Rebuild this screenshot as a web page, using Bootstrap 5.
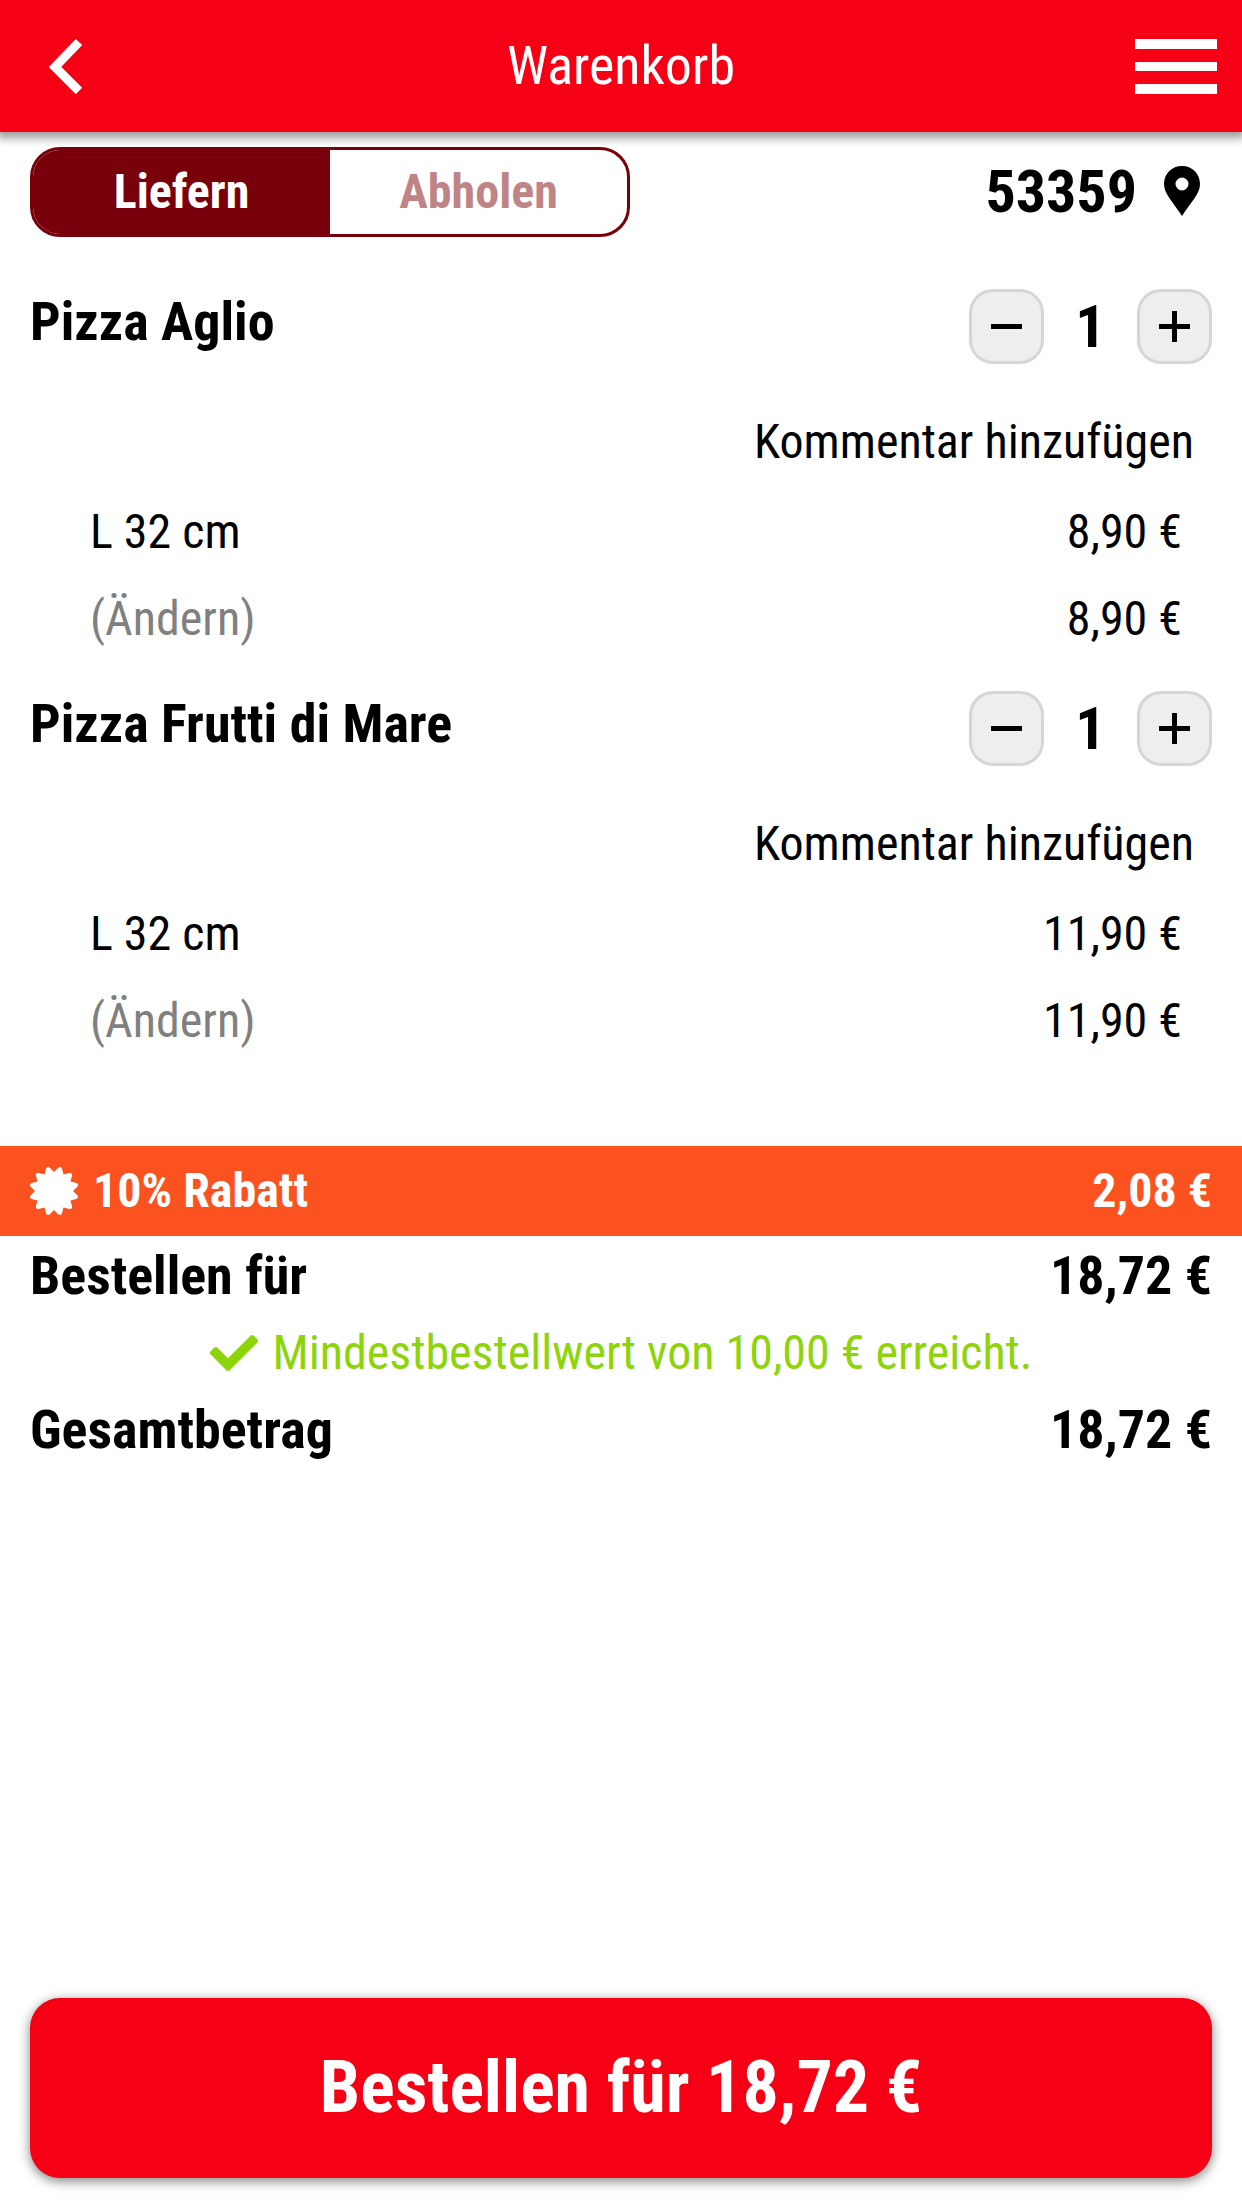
<!DOCTYPE html>
<html lang="de">
<head>
<meta charset="utf-8">
<meta name="viewport" content="width=device-width, initial-scale=1">
<title>Warenkorb</title>
<link href="https://cdn.jsdelivr.net/npm/bootstrap@5.3.0/dist/css/bootstrap.min.css" rel="stylesheet">
<style>
  body { font-family: "Roboto Condensed", Roboto, sans-serif; font-size: 48px; line-height: 72px; color: #000; background: #fff; }
  svg { display: block; flex: none; }
  .app-bar { height: 132px; padding: 0 25px; background: #f50014; color: #fff; box-shadow: 0 3px 9px 3px rgba(0,0,0,.4); }
  .app-title { font-size: 54px; line-height: 64px; font-weight: 400; }
  .bar-side { flex: 1 1 0; }
  .plain-btn { padding: 0; border: 0; background: none; color: inherit; }
  .gutter { padding-left: 30px; padding-right: 30px; }
  .mode-row { margin-top: 15px; }
  .mode-switch { width: 600px; height: 90px; border: 3px solid #78000a; border-radius: 30px; overflow: hidden; }
  .mode-switch label { flex: 1 1 0; display: flex; align-items: center; justify-content: center; font-weight: 700; color: #bf8486; cursor: pointer; }
  .mode-switch .btn-check:checked + label { background: #78000a; color: #fff; }
  .zip-btn { gap: 27px; padding-right: 12px; font-size: 60px; font-weight: 700; line-height: 70px; }
  .cart-list { padding-top: 52px; padding-bottom: 24px; }
  .cart-item { padding-bottom: 29px; }
  .item-title { font-size: 54px; line-height: 66px; font-weight: 700; margin: 0; }
  .stepper-btn { width: 75px; height: 75px; padding: 0; border: 3px solid #d6d6d6; border-radius: 24px; background: #eee; display: flex; align-items: center; justify-content: center; color: #000; }
  .qty { width: 93px; font-size: 60px; font-weight: 700; text-align: center; }
  .note-row { margin-top: 34px; margin-bottom: 3px; height: 87px; padding-right: 18px; }
  .option-row { height: 87px; padding: 0 30px 0 60px; }
  .change-link, .note-link { text-decoration: none; color: #000; }
  .change-link { color: #808080; }
  .totals { padding-top: 29px; }
  .discount-row { height: 90px; background: #fc521f; color: #fff; font-weight: 700; }
  .icon-text { gap: 15px; }
  .sum-row { height: 80px; font-size: 54px; font-weight: 700; }
  .minimum-row { height: 74px; color: #8ed40a; }
  .order-btn { height: 180px; border: 0; border-radius: 30px; background: #f50014; color: #fff; font-size: 72px; font-weight: 700; box-shadow: 0 3px 12px rgba(0,0,0,.5); }
  .order-foot { padding-bottom: 30px; }
</style>
</head>
<body>
<div class="d-flex flex-column min-vh-100">
  <header class="app-bar d-flex align-items-center">
    <div class="bar-side d-flex">
      <button type="button" class="plain-btn ps-4" aria-label="Zurück">
        <svg width="34" height="56" viewBox="0 0 34 56" fill="none" stroke="currentColor" stroke-width="9"><path d="M30 4 6 29 30 53"/></svg>
      </button>
    </div>
    <h1 class="app-title m-0">Warenkorb</h1>
    <div class="bar-side d-flex justify-content-end">
      <button type="button" class="plain-btn" aria-label="Menü">
        <svg width="82" height="56" viewBox="0 0 82 56" fill="currentColor"><path d="M0 1h82v10H0zM0 24h82v9H0zM0 46h82v10H0z"/></svg>
      </button>
    </div>
  </header>

  <main class="flex-grow-1">
    <div class="mode-row gutter d-flex align-items-center justify-content-between">
      <div class="mode-switch d-flex" role="group" aria-label="Bestellart">
        <input type="radio" class="btn-check" name="mode" id="mode-delivery" checked>
        <label for="mode-delivery">Liefern</label>
        <input type="radio" class="btn-check" name="mode" id="mode-pickup">
        <label for="mode-pickup">Abholen</label>
      </div>
      <button type="button" class="plain-btn zip-btn d-flex align-items-center">53359
        <svg width="36" height="52" viewBox="0 0 36 52" fill="currentColor"><path d="M18 0C8 0 0 7.500 0 18c0 10 9 18 18 32 9-14 18-22 18-32C36 7.500 28 0 18 0zm0 24.500a6.500 6.500 0 1 1 0-13 6.500 6.500 0 0 1 0 13z"/></svg>
      </button>
    </div>

    <section class="cart-list gutter">
      <article class="cart-item">
        <div class="d-flex justify-content-between align-items-start">
          <h2 class="item-title">Pizza Aglio</h2>
          <div class="d-flex align-items-center">
            <button type="button" class="stepper-btn" aria-label="Weniger"><svg width="31" height="31" viewBox="0 0 31 31"><path d="M0 13h31v5H0z"/></svg></button>
            <span class="qty">1</span>
            <button type="button" class="stepper-btn" aria-label="Mehr"><svg width="31" height="31" viewBox="0 0 31 31"><path d="M0 13h13V0h5v13h13v5H18v13h-5V18H0z"/></svg></button>
          </div>
        </div>
        <div class="note-row d-flex align-items-center justify-content-end"><a href="#" class="note-link">Kommentar hinzufügen</a></div>
        <div class="option-row d-flex align-items-center justify-content-between"><span>L 32 cm</span><span>8,90 €</span></div>
        <div class="option-row d-flex align-items-center justify-content-between"><a href="#" class="change-link">(Ändern)</a><span>8,90 €</span></div>
      </article>

      <article class="cart-item">
        <div class="d-flex justify-content-between align-items-start">
          <h2 class="item-title">Pizza Frutti di Mare</h2>
          <div class="d-flex align-items-center">
            <button type="button" class="stepper-btn" aria-label="Weniger"><svg width="31" height="31" viewBox="0 0 31 31"><path d="M0 13h31v5H0z"/></svg></button>
            <span class="qty">1</span>
            <button type="button" class="stepper-btn" aria-label="Mehr"><svg width="31" height="31" viewBox="0 0 31 31"><path d="M0 13h13V0h5v13h13v5H18v13h-5V18H0z"/></svg></button>
          </div>
        </div>
        <div class="note-row d-flex align-items-center justify-content-end"><a href="#" class="note-link">Kommentar hinzufügen</a></div>
        <div class="option-row d-flex align-items-center justify-content-between"><span>L 32 cm</span><span>11,90 €</span></div>
        <div class="option-row d-flex align-items-center justify-content-between"><a href="#" class="change-link">(Ändern)</a><span>11,90 €</span></div>
      </article>
    </section>

    <section class="totals">
      <div class="discount-row gutter d-flex align-items-center justify-content-between">
        <span class="icon-text d-flex align-items-center">
          <svg width="48" height="48" viewBox="0 0 512 512" fill="currentColor"><path d="M458.622 255.920l45.985-45.005c13.708-12.977 7.316-36.039-10.664-40.339l-62.650-15.990 17.661-62.015c4.991-17.838-11.829-34.663-29.661-29.671l-61.994 17.667-15.984-62.671C337.085.197 313.765-6.276 300.990 7.228L256 53.570 211.011 7.229c-12.630-13.351-36.047-7.234-40.325 10.668l-15.984 62.671-61.995-17.667C74.870 57.907 58.056 74.738 63.046 92.572l17.661 62.015-62.650 15.990C.069 174.878-6.310 197.944 7.392 210.915l45.985 45.005-45.985 45.004c-13.708 12.977-7.316 36.039 10.664 40.339l62.650 15.990-17.661 62.015c-4.991 17.838 11.829 34.663 29.661 29.671l61.994-17.667 15.984 62.671c4.439 18.575 27.696 24.018 40.325 10.668L256 458.610l44.989 46.001c12.500 13.488 35.987 7.486 40.325-10.668l15.984-62.671 61.994 17.667c17.836 4.994 34.651-11.837 29.661-29.671l-17.661-62.015 62.650-15.990c17.987-4.302 24.366-27.367 10.664-40.339z"/></svg>
          10% Rabatt
        </span>
        <span>2,08 €</span>
      </div>
      <div class="sum-row gutter d-flex align-items-center justify-content-between"><span>Bestellen für</span><span>18,72 €</span></div>
      <div class="minimum-row icon-text d-flex align-items-center justify-content-center">
        <svg width="48" height="48" viewBox="0 0 512 512" fill="currentColor"><path d="M173.898 439.404l-166.400-166.400c-9.997-9.997-9.997-26.206 0-36.204l36.203-36.204c9.997-9.998 26.207-9.998 36.204 0L192 312.690 432.095 72.596c9.997-9.997 26.207-9.997 36.204 0l36.203 36.204c9.997 9.997 9.997 26.206 0 36.204l-294.400 294.401c-9.998 9.997-26.207 9.997-36.204-.001z"/></svg>
        <span>Mindestbestellwert von 10,00 € erreicht.</span>
      </div>
      <div class="sum-row gutter d-flex align-items-center justify-content-between"><span>Gesamtbetrag</span><span>18,72 €</span></div>
    </section>
  </main>

  <footer class="order-foot gutter">
    <button type="button" class="order-btn w-100">Bestellen für 18,72 €</button>
  </footer>
</div>
<script src="https://cdn.jsdelivr.net/npm/bootstrap@5.3.0/dist/js/bootstrap.bundle.min.js"></script>
</body>
</html>
